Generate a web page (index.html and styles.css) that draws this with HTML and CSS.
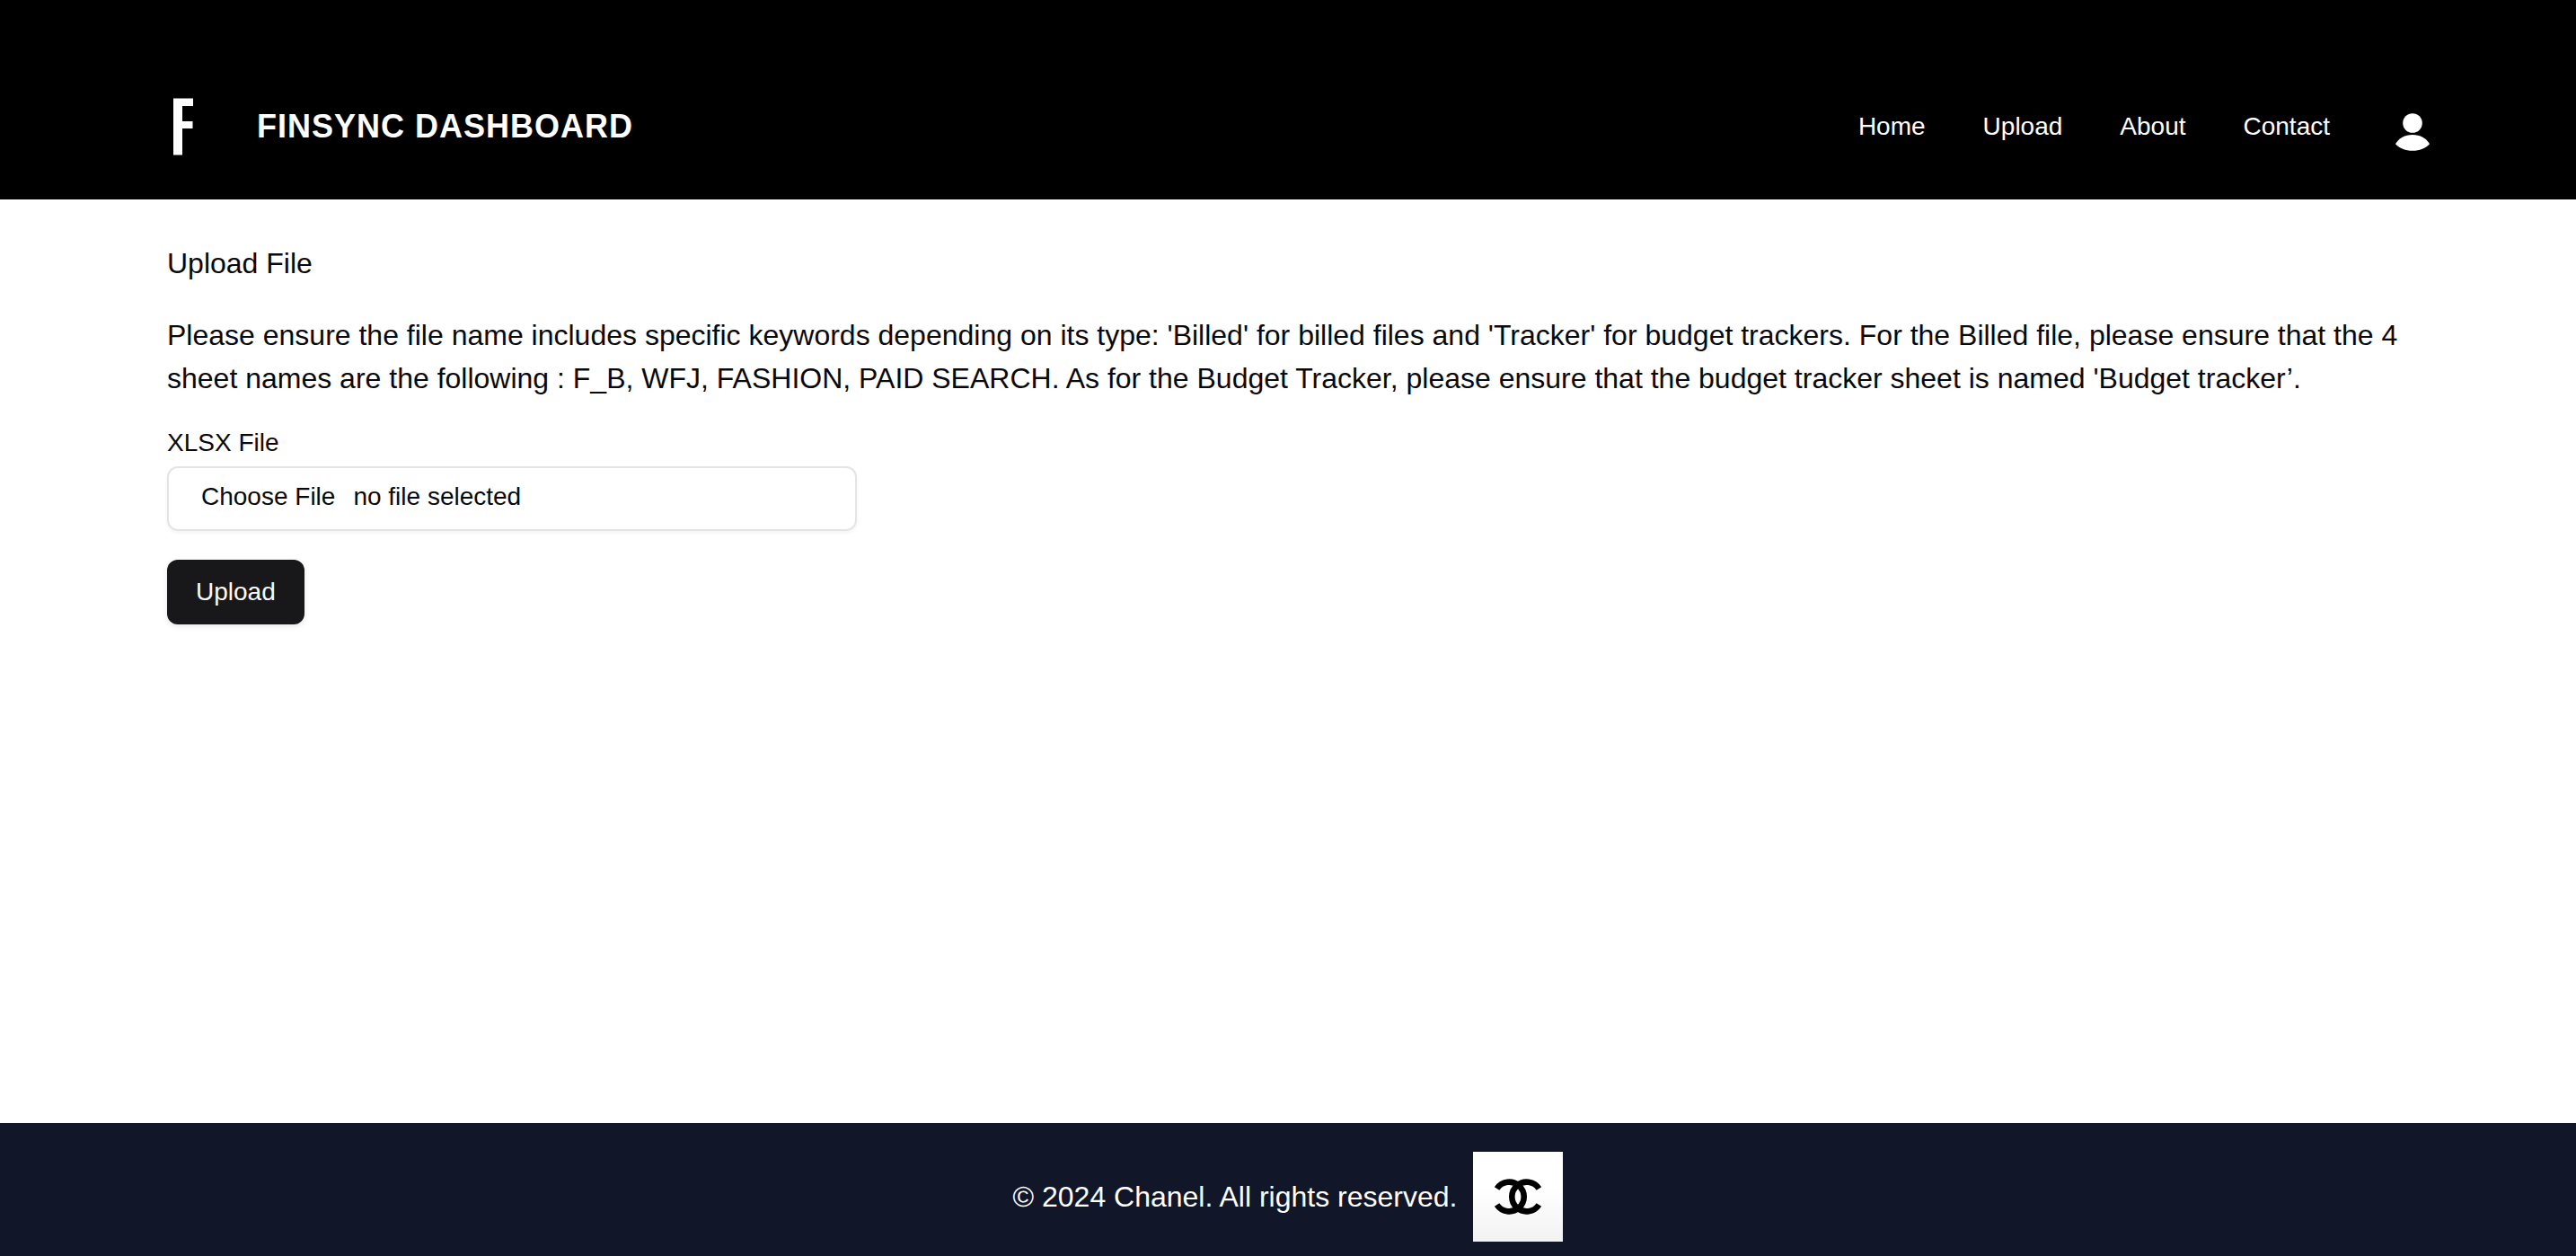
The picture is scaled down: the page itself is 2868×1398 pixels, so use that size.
FILE: index.html
```html
<!DOCTYPE html>
<html lang="en">
<head>
<meta charset="utf-8">
<meta name="viewport" content="width=device-width, initial-scale=1">
<title>Finsync Dashboard</title>
<link rel="stylesheet" href="styles.css">
</head>
<body>
<header class="site-header">
  <a class="brand" href="#">
    <svg class="brand-mark" viewBox="0 0 36 64" aria-hidden="true"><path d="M7 0.500H29V9H17V26H28.500V34H17V63.500H7Z" fill="#fff"/></svg>
    <span class="brand-name">FINSYNC DASHBOARD</span>
  </a>
  <nav class="site-nav">
    <a href="#">Home</a>
    <a href="#">Upload</a>
    <a href="#">About</a>
    <a href="#">Contact</a>
    <a class="account" href="#" aria-label="Account">
      <svg class="account-icon" viewBox="0 0 56 56" aria-hidden="true" fill="#fff"><circle cx="28" cy="22" r="10.800"/><path d="M9 45.200C12.500 39 19.500 35 28 35S43.500 39 47 45.200C42.500 50 36 52.800 28 52.800S13.500 50 9 45.200Z"/></svg>
    </a>
  </nav>
</header>
<main class="content">
  <h1 class="page-title">Upload File</h1>
  <p class="intro">Please ensure the file name includes specific keywords depending on its type: 'Billed' for billed files and 'Tracker' for budget trackers. For the Billed file, please ensure that the 4 sheet names are the following : F_B, WFJ, FASHION, PAID SEARCH. As for the Budget Tracker, please ensure that the budget tracker sheet is named 'Budget tracker’.</p>
  <form class="upload-form">
    <label class="field-label" for="xlsx">XLSX File</label>
    <label class="file-box" for="xlsx">
      <input class="file-input" id="xlsx" type="file" accept=".xlsx">
      <span>Choose File</span>
      <span>no file selected</span>
    </label>
    <button class="upload-button" type="submit">Upload</button>
  </form>
</main>
<footer class="site-footer">
  <p class="copyright">© 2024 Chanel. All rights reserved.</p>
  <svg class="footer-logo" viewBox="0 0 100 100" role="img" aria-label="Chanel">
    <defs><linearGradient id="paper" x1="0" y1="0" x2="0" y2="1"><stop offset="0.400" stop-color="#fff"/><stop offset="1" stop-color="#f2f2f2"/></linearGradient></defs>
    <rect width="100" height="100" fill="url(#paper)"/>
    <g fill="none" stroke="#000" stroke-width="6.600">
      <path d="M26.600 41A16.400 16.400 0 1 1 26.600 59"/>
      <path d="M73.400 41A16.400 16.400 0 1 0 73.400 59"/>
    </g>
  </svg>
</footer>
</body>
</html>
```
FILE: styles.css
```css
* {
  box-sizing: border-box;
}

body {
  margin: 0;
  min-height: 100vh;
  display: flex;
  flex-direction: column;
  background: #fff;
  color: #09090b;
  font-family: "Liberation Sans", Arial, sans-serif;
  font-size: 32px;
  line-height: 48px;
}

a {
  color: inherit;
  text-decoration: none;
}

.site-header {
  display: flex;
  align-items: center;
  justify-content: space-between;
  padding: 109px 154px 49px 186px;
  background: #000;
  color: #fff;
}

.brand {
  display: flex;
  align-items: center;
  gap: 64px;
}

.brand-mark {
  width: 36px;
  height: 64px;
}

.brand-name {
  font-size: 36px;
  font-weight: 700;
  letter-spacing: 1px;
}

.site-nav {
  display: flex;
  align-items: center;
  gap: 64px;
  font-size: 28px;
  line-height: 40px;
}

.account {
  padding-top: 4px;
}

.account-icon {
  display: block;
  width: 56px;
  height: 56px;
}

.content {
  flex: 1;
  padding: 47px 186px;
}

.page-title {
  margin: 0 0 32px;
  font-size: 32px;
  font-weight: 400;
}

.intro {
  margin: 0 0 28px;
}

.upload-form {
  display: flex;
  flex-direction: column;
  align-items: flex-start;
  font-size: 28px;
  line-height: 40px;
}

.field-label {
  margin-bottom: 6px;
}

.file-box {
  position: relative;
  display: flex;
  gap: 20px;
  width: 768px;
  max-width: 100%;
  height: 72px;
  margin-bottom: 32px;
  padding: 12px 36px;
  border: 2px solid #e4e4e7;
  border-radius: 12px;
  box-shadow: 0 2px 4px rgba(0, 0, 0, 0.05);
}

.file-input {
  position: absolute;
  inset: 0;
  width: 100%;
  height: 100%;
  opacity: 0;
}

.upload-button {
  height: 72px;
  padding: 0 32px;
  border: 0;
  border-radius: 12px;
  background: #18181b;
  color: #fafafa;
  font: inherit;
  box-shadow: 0 2px 6px rgba(0, 0, 0, 0.1);
}

.site-footer {
  display: flex;
  align-items: center;
  justify-content: center;
  gap: 18px;
  padding: 32px 32px 16px;
  background: #111628;
  color: #fff;
}

.copyright {
  margin: 0;
}

.footer-logo {
  width: 100px;
  height: 100px;
}
```
